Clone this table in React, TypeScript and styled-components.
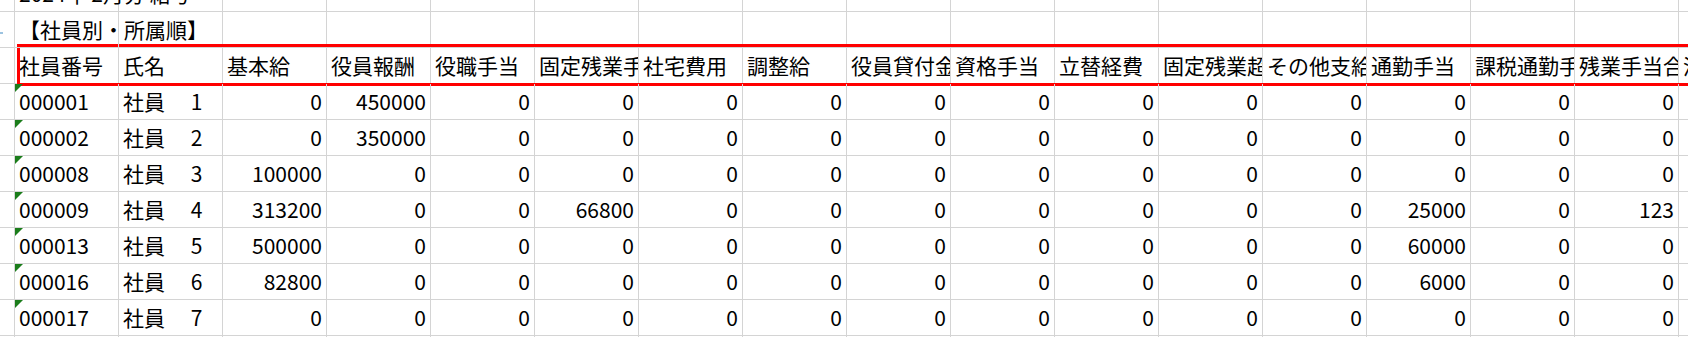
import React from 'react';
import styled, {createGlobalStyle} from 'styled-components';

const GlobalStyle = createGlobalStyle`
  html, body {
    margin: 0;
    padding: 0;
    background: #fff;
    overflow: hidden;
  }
  body {
    font-family: "Noto Sans CJK JP", "Noto Sans", sans-serif;
    color: #000;
  }
`

const Sheet = styled.div`
  display: flex;
  flex-direction: column;
  margin-top: -24px;
  width: 1688px;
  height: 361px;
  overflow: hidden;
`

const Row = styled.div<{ $header?: boolean }>`
  display: flex;
  flex: none;
  height: 36px;
  position: relative;

  ${p => p.$header && `
    &::after {
      content: '';
      position: absolute;
      top: -4px;
      left: 17px;
      right: -40px;
      height: 42px;
      box-sizing: border-box;
      border: 3px solid #ff0000;
      pointer-events: none;
    }
  `}
`

// only the last pixels of the row numbers are still in view
const RowHead = styled.div<{ $num?: boolean }>`
  flex: none;
  width: 15px;
  box-sizing: border-box;
  border-right: 1px solid #d4d4d4;
  border-bottom: 1px solid #d4d4d4;
  background: #fff;
  position: relative;

  ${p => p.$num && `
    &::after {
      content: '';
      position: absolute;
      left: 0;
      bottom: 13px;
      width: 3px;
      height: 2px;
      background: #9cc3e0;
    }
  `}
`

const Cell = styled.div<{ $align?: 'left' | 'right'; $marked?: boolean }>`
  flex: none;
  width: 104px;
  box-sizing: border-box;
  border-right: 1px solid #d4d4d4;
  border-bottom: 1px solid #d4d4d4;
  padding: 0 4px 7px 4px;
  display: flex;
  align-items: flex-end;
  justify-content: ${p => (p.$align === 'right' ? 'flex-end' : 'flex-start')};
  font-size: 21px;
  line-height: 21px;
  white-space: pre;
  overflow: hidden;
  position: relative;

  ${p => p.$marked && `
    &::before {
      content: '';
      position: absolute;
      top: 0;
      left: 0;
      border-top: 8px solid #1b7d1b;
      border-right: 8px solid transparent;
    }
  `}
`

const Wide = styled(Cell)`
  overflow: visible;
  z-index: 1;
`

const headers = [
  '社員番号', '氏名', '基本給', '役員報酬', '役職手当', '固定残業手当', '社宅費用', '調整給',
  '役員貸付金', '資格手当', '立替経費', '固定残業超過', 'その他支給', '通勤手当', '課税通勤手当',
  '残業手当合計', '深夜手当',
];

const employees: [string, string, number[]][] = [
  ['000001', '社員　 1', [0, 450000, 0, 0, 0, 0, 0, 0, 0, 0, 0, 0, 0, 0]],
  ['000002', '社員　 2', [0, 350000, 0, 0, 0, 0, 0, 0, 0, 0, 0, 0, 0, 0]],
  ['000008', '社員　 3', [100000, 0, 0, 0, 0, 0, 0, 0, 0, 0, 0, 0, 0, 0]],
  ['000009', '社員　 4', [313200, 0, 0, 66800, 0, 0, 0, 0, 0, 0, 0, 25000, 0, 123]],
  ['000013', '社員　 5', [500000, 0, 0, 0, 0, 0, 0, 0, 0, 0, 0, 60000, 0, 0]],
  ['000016', '社員　 6', [82800, 0, 0, 0, 0, 0, 0, 0, 0, 0, 0, 6000, 0, 0]],
  ['000017', '社員　 7', [0, 0, 0, 0, 0, 0, 0, 0, 0, 0, 0, 0, 0, 0]],
];

function EmptyCells({count}: { count: number }) {
  return (
    <>
      {Array.from({length: count}).map((_, i) => <Cell key={i}/>)}
    </>
  );
}

function App() {
  return (
    <>
      <GlobalStyle/>
      <Sheet>
        <Row>
          <RowHead/>
          <Wide>2024年 2月分 給与</Wide>
          <EmptyCells count={16}/>
        </Row>
        <Row>
          <RowHead $num/>
          <Wide>【社員別・所属順】</Wide>
          <EmptyCells count={16}/>
        </Row>
        <Row $header>
          <RowHead/>
          {headers.map(h => <Cell key={h}>{h}</Cell>)}
        </Row>
        {employees.map(([code, name, values]) => (
          <Row key={code}>
            <RowHead/>
            <Cell $marked>{code}</Cell>
            <Cell>{name}</Cell>
            {values.map((v, i) => <Cell key={i} $align="right">{v}</Cell>)}
            <Cell/>
          </Row>
        ))}
        <Row>
          <RowHead/>
          <EmptyCells count={17}/>
        </Row>
      </Sheet>
    </>
  );
}

export default App;
